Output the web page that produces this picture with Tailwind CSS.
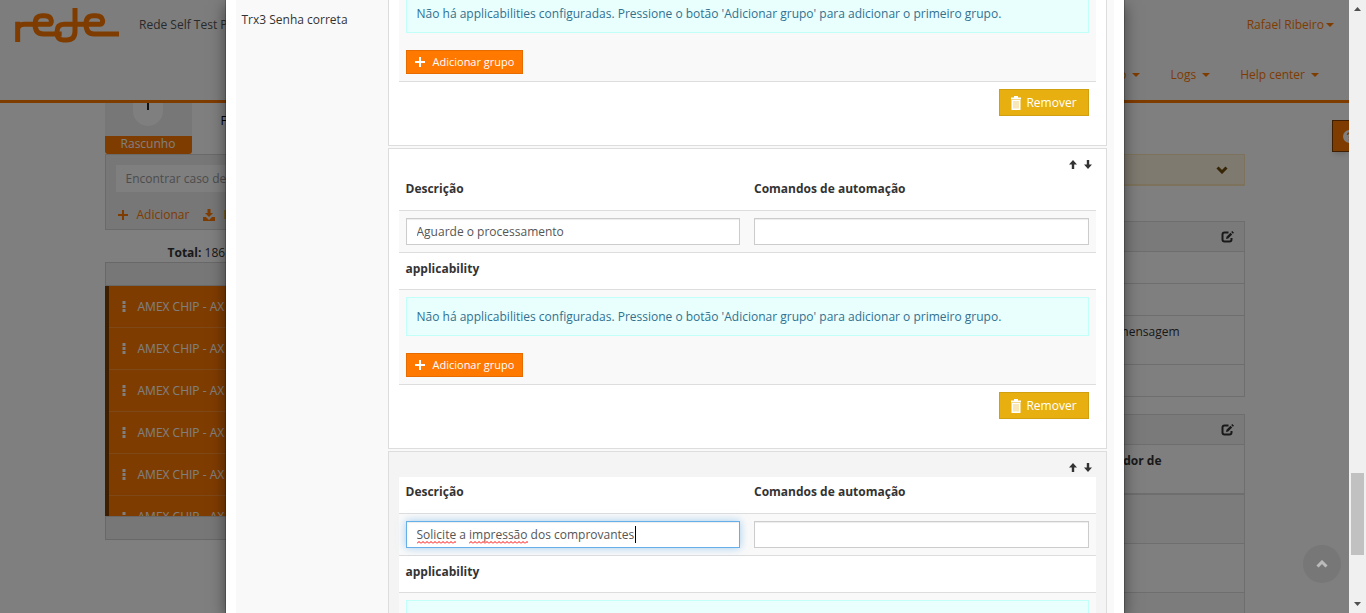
<!DOCTYPE html>
<html lang="pt-BR">
<head>
<meta charset="utf-8">
<meta name="viewport" content="width=device-width, initial-scale=1">
<title>Rede Self Test</title>
<script src="https://cdn.jsdelivr.net/npm/@tailwindcss/browser@4"></script>
</head>
<body class="font-['Open_Sans',sans-serif] text-xs leading-5 text-[#333]">
<svg class="hidden" aria-hidden="true">
  <symbol id="caret" viewBox="0 0 8 4"><path d="M0 0h8L4 4z" fill="currentColor"/></symbol>
  <symbol id="plus" viewBox="0 0 10 10"><path d="M4 0h2v4h4v2H6v4H4V6H0V4h4z" fill="currentColor"/></symbol>
  <symbol id="trash" viewBox="0 0 12 14"><path d="M4 0h4v1.500h3V3.500H1V1.500h3z" fill="currentColor"/><path d="M1.500 4h9v10h-9z" fill="currentColor"/><path d="M4 5v7.500M6 5v7.500M8 5v7.500" stroke="#e7b010" stroke-width=".6"/></symbol>
  <symbol id="up" viewBox="0 0 8 9"><path d="M4 0l4 4.500H5.200V9H2.800V4.500H0z" fill="currentColor"/></symbol>
  <symbol id="down" viewBox="0 0 8 9"><path d="M4 9L0 4.500h2.800V0h2.400v4.500H8z" fill="currentColor"/></symbol>
  <symbol id="edit" viewBox="0 0 13 12"><path d="M7.500 1.500H3.500q-2 0-2 2v5q0 2 2 2h5q2 0 2-2V7" fill="none" stroke="currentColor" stroke-width="2"/><path d="M5 8l.5-2.300L9.500 1.800l1.700 1.700-4 4zM10.200 1.100L11.300 0l1.700 1.700-1.100 1.100z" fill="currentColor"/></symbol>
  <symbol id="dots" viewBox="0 0 4 11"><path d="M.5 0h3v3h-3zM.5 4h3v3h-3zM.5 8h3v3h-3z" fill="currentColor"/></symbol>
  <symbol id="chev" viewBox="0 0 12 8"><path d="M1.500 1.500L6 6l4.500-4.500" fill="none" stroke="currentColor" stroke-width="3"/></symbol>
</svg>

<div class="flex h-screen overflow-hidden bg-white">
  <div class="relative min-w-0 flex-1 overflow-hidden">

    <!-- Page behind the dialog -->
    <header class="flex h-[103px] justify-between border-b-3 border-[#ff7800] bg-[#fafafa]">
      <div class="flex items-start pl-[10px]">
        <svg class="mt-1 h-[42px] w-[114px]" viewBox="0 0 342 126" fill="none" stroke="#ff7800" stroke-width="15" role="img" aria-label="Rede">
          <path d="M23 114V53M23 76Q25 61 42 61H118Q124 60 124 50Q122 35 104 35H96Q75 35 75 60Q75 90 100 90H155"/>
          <path d="M195 12V82Q195 108 170 108H160Q141 108 141 84Q141 61 162 61H270Q278 60 278 50Q276 35 258 35H250Q228 35 228 60Q228 90 252 90H327"/>
        </svg>
        <span class="mt-[15px] ml-[15px] text-[#555]">Rede Self Test P</span>
      </div>
      <nav class="flex flex-col items-end text-[#ff7800]">
        <a href="#" class="mt-[15px] mr-[15px] flex items-center">Rafael Ribeiro<svg class="ml-[2px] h-1 w-2"><use href="#caret"/></svg></a>
        <div class="mt-[30px] mr-[30px] flex gap-[30px]">
          <a href="#" class="flex items-center gap-[6px]">Configuração<svg class="h-1 w-2"><use href="#caret"/></svg></a>
          <a href="#" class="flex items-center gap-[6px]">Logs<svg class="h-1 w-2"><use href="#caret"/></svg></a>
          <a href="#" class="flex items-center gap-[6px]">Help center<svg class="h-1 w-2"><use href="#caret"/></svg></a>
        </div>
      </nav>
    </header>

    <div class="mx-auto flex max-w-[1140px] justify-between">
      <section class="w-1/3">
        <div class="flex">
          <div class="w-[87px]">
            <div class="flex h-[33px] justify-center bg-[#eee]"><div class="flex h-[23px] w-[30px] justify-center rounded-b-full bg-white"><div class="h-[7px] w-[2px] bg-[#222]"></div></div></div>
            <div class="h-[18px] rounded-b-[3px] bg-[#ff7800] text-center leading-4 text-white">Rascunho</div>
          </div>
          <span class="mt-2 ml-[29px] text-black">F</span>
        </div>
        <div class="h-[76px] border border-[#d5d5d5] bg-[#eee] px-[10px] pt-[10px]">
          <input type="text" aria-label="Encontrar caso de teste" placeholder="Encontrar caso de teste" class="block h-[27px] w-full bg-white px-[10px] placeholder:text-[#999]">
          <div class="mt-[13px] flex text-[#ff7800]">
            <button class="flex items-center"><svg class="mr-[9px] ml-[2px] h-[10px] w-[10px]"><use href="#plus"/></svg>Adicionar</button>
            <button class="ml-[14px] flex items-center gap-2"><svg class="h-3 w-3" viewBox="0 0 12 12" fill="currentColor"><path d="M4.500 0h3v4H10L6 8 2 4h2.500zM0 8h3l3 3 3-3h3v4H0z"/></svg>Importar</button>
          </div>
        </div>
        <p class="mt-[13px] pl-[63px] leading-[19px]"><b>Total:</b> 186</p>
        <div class="h-6 border border-[#d0d0d0] bg-[#eee]"></div>
        <ul class="h-[230px] overflow-hidden border-l-4 border-[#7f3c00] bg-[#ff7800] text-white">
          <li class="flex h-[42px] items-center border-b border-[#ff9030] pl-[13px]"><svg class="mr-3 h-[11px] w-1"><use href="#dots"/></svg>AMEX CHIP - AX</li>
          <li class="flex h-[42px] items-center border-b border-[#ff9030] pl-[13px]"><svg class="mr-3 h-[11px] w-1"><use href="#dots"/></svg>AMEX CHIP - AX</li>
          <li class="flex h-[42px] items-center border-b border-[#ff9030] pl-[13px]"><svg class="mr-3 h-[11px] w-1"><use href="#dots"/></svg>AMEX CHIP - AX</li>
          <li class="flex h-[42px] items-center border-b border-[#ff9030] pl-[13px]"><svg class="mr-3 h-[11px] w-1"><use href="#dots"/></svg>AMEX CHIP - AX</li>
          <li class="flex h-[42px] items-center border-b border-[#ff9030] pl-[13px]"><svg class="mr-3 h-[11px] w-1"><use href="#dots"/></svg>AMEX CHIP - AX</li>
          <li class="flex h-[42px] items-center pl-[13px]"><svg class="mr-3 h-[11px] w-1"><use href="#dots"/></svg>AMEX CHIP - AX</li>
        </ul>
        <div class="h-6 border border-[#d0d0d0] bg-[#eee]"></div>
      </section>

      <section class="mt-[51px] w-1/3">
        <div class="flex h-8 items-center justify-end border border-b-2 border-[#fbe6b8] bg-[#fef5e0] pr-4 text-[#6d4c0c]"><svg class="h-2 w-3"><use href="#chev"/></svg></div>
        <div class="mt-[35px] border border-[#ddd]">
          <div class="flex h-[30px] items-center justify-end border-b border-[#ddd] bg-[#f5f5f5] pr-[10px]"><button aria-label="Editar"><svg class="h-3 w-[13px]"><use href="#edit"/></svg></button></div>
          <div class="h-8 border-b border-[#ddd]"></div>
          <div class="h-8 border-b border-[#ddd]"></div>
          <div class="h-[49px] border-b border-[#ddd] pt-[6px] pr-16 text-right">mensagem</div>
          <div class="h-[31px]"></div>
        </div>
        <div class="mt-[17px] border border-[#ddd]">
          <div class="flex h-[30px] items-center justify-end border-b border-[#ddd] bg-[#f5f5f5] pr-[10px]"><button aria-label="Editar"><svg class="h-3 w-[13px]"><use href="#edit"/></svg></button></div>
          <div class="h-[50px] border-b-2 border-[#ddd] pt-[6px] pr-[82px] text-right font-bold">Identificador de</div>
          <div class="h-[49px] border-b border-[#ddd] bg-[#f9f9f9]"></div>
          <div class="h-[49px] border-b border-[#ddd]"></div>
          <div class="h-[49px] bg-[#f9f9f9]"></div>
        </div>
      </section>
    </div>

    <button aria-label="Ajuda" class="absolute top-[120px] right-0 flex h-8 w-[17px] items-center overflow-hidden border border-r-0 border-[#7f3c00] bg-[#ff7800] pl-[10px] shadow-md"><svg class="h-[13px] w-[13px] shrink-0" viewBox="0 0 13 13"><circle cx="6.500" cy="6.500" r="6.500" fill="#fff"/><path d="M4.500 5q0-2 2-2t2 1.800q0 1-2 2V8M6.500 9v1.500" fill="none" stroke="#ff7800" stroke-width="1.500"/></svg></button>

    <div class="absolute inset-0 bg-black/50"></div>
    <button aria-label="Voltar ao topo" class="absolute right-2 bottom-[30px] flex h-[38px] w-[38px] items-center justify-center rounded-full bg-[#777] text-[#bbb]"><svg class="h-2 w-3 rotate-180"><use href="#chev"/></svg></button>

    <!-- Dialog -->
    <div role="dialog" aria-label="Passos" class="absolute inset-0 mx-auto max-w-[898px] overflow-hidden bg-white px-[10px] shadow-[0_0_0_1px_rgba(0,0,0,0.2),0_5px_15px_rgba(0,0,0,0.5)]">
      <div class="flex h-full bg-[#f9f9f9]">
        <aside class="w-[152px] shrink-0 pt-[10px] pl-[6px]">Trx3 Senha correta</aside>
        <div class="flex min-w-0 flex-1 flex-col gap-[2px] pr-[7px]">

          <article class="shrink-0 border border-t-0 border-[#ddd] bg-white px-[10px]">
            <div class="border-b border-[#ddd] bg-[#f9f9f9] px-[7px] pb-[7px]">
              <p class="h-[33px] border border-t-0 border-[#c2fff8] bg-[#e8fffe] px-[10px] pt-1 text-[#31708f]">Não há applicabilities configuradas. Pressione o botão 'Adicionar grupo' para adicionar o primeiro grupo.</p>
              <button class="mt-[17px] flex h-6 items-center border border-[#e66c00] bg-[#ff7800] px-2 text-[11px] font-medium text-white"><svg class="mr-2 h-[10px] w-[10px]"><use href="#plus"/></svg>Adicionar grupo</button>
            </div>
            <div class="flex justify-end pt-[7px] pr-[7px] pb-[29px]"><button class="flex h-[27px] w-[90px] items-center justify-center gap-1 border border-[#d0a010] bg-[#e7b010] font-medium text-white"><svg class="h-[14px] w-3"><use href="#trash"/></svg>Remover</button></div>
          </article>

          <article class="shrink-0 border border-[#ddd] bg-white px-[10px]">
            <div class="flex h-[25px] items-center justify-end gap-[7px] pt-[6px] pr-1">
              <button aria-label="Mover para cima"><svg class="h-[9px] w-2"><use href="#up"/></svg></button>
              <button aria-label="Mover para baixo"><svg class="h-[9px] w-2"><use href="#down"/></svg></button>
            </div>
            <table class="w-full table-fixed border-separate border-spacing-0 bg-white text-left">
              <tr class="h-[36px]"><th id="d2" class="px-[7px] pb-[6px]">Descrição</th><th id="c2" class="px-[7px] pb-[6px]">Comandos de automação</th></tr>
              <tr class="bg-[#f9f9f9]">
                <td class="border-t border-[#ddd] p-[7px]"><input type="text" aria-labelledby="d2" value="Aguarde o processamento" class="block h-[27px] w-full border border-[#ccc] bg-white px-[10px] text-[#555] shadow-[inset_0_1px_1px_rgba(0,0,0,0.075)]"></td>
                <td class="border-t border-[#ddd] p-[7px]"><input type="text" aria-labelledby="c2" class="block h-[27px] w-full border border-[#ccc] bg-white px-[10px] text-[#555] shadow-[inset_0_1px_1px_rgba(0,0,0,0.075)]"></td>
              </tr>
              <tr class="h-[37px]"><th colspan="2" class="border-t border-[#ddd] px-[7px] pb-[5px]">applicability</th></tr>
              <tr class="bg-[#f9f9f9]"><td colspan="2" class="border-y border-[#ddd] p-[7px]">
                <p class="h-[39px] border border-[#c2fff8] bg-[#e8fffe] px-[10px] pt-[9px] text-[#31708f]">Não há applicabilities configuradas. Pressione o botão 'Adicionar grupo' para adicionar o primeiro grupo.</p>
                <button class="mt-[17px] flex h-6 items-center border border-[#e66c00] bg-[#ff7800] px-2 text-[11px] font-medium text-white"><svg class="mr-2 h-[10px] w-[10px]"><use href="#plus"/></svg>Adicionar grupo</button>
              </td></tr>
            </table>
            <div class="flex justify-end pt-[7px] pr-[7px] pb-[29px]"><button class="flex h-[27px] w-[90px] items-center justify-center gap-1 border border-[#d0a010] bg-[#e7b010] font-medium text-white"><svg class="h-[14px] w-3"><use href="#trash"/></svg>Remover</button></div>
          </article>

          <article class="shrink-0 border border-[#ddd] bg-[#f4f4f4] px-[10px]">
            <div class="flex h-[25px] items-center justify-end gap-[7px] pt-[6px] pr-1">
              <button aria-label="Mover para cima"><svg class="h-[9px] w-2"><use href="#up"/></svg></button>
              <button aria-label="Mover para baixo"><svg class="h-[9px] w-2"><use href="#down"/></svg></button>
            </div>
            <table class="w-full table-fixed border-separate border-spacing-0 bg-white text-left">
              <tr class="h-[36px]"><th id="d3" class="px-[7px] pb-[6px]">Descrição</th><th id="c3" class="px-[7px] pb-[6px]">Comandos de automação</th></tr>
              <tr class="bg-[#f9f9f9]">
                <td class="border-t border-[#ddd] p-[7px]">
                  <div class="relative">
                    <input type="text" aria-labelledby="d3" value="Solicite a impressão dos comprovantes" class="block h-[27px] w-full border border-[#66afe9] bg-white px-[10px] text-[#555] shadow-[inset_0_1px_1px_rgba(0,0,0,0.075),0_0_8px_rgba(102,175,233,0.6)]">
                    <svg class="absolute top-[20px] left-[11px] h-[3px] w-[220px]" aria-hidden="true">
                      <defs><pattern id="wave" width="4" height="3" patternUnits="userSpaceOnUse"><path d="M0 2.500L2 .5l2 2" fill="none" stroke="#f00"/></pattern></defs>
                      <rect width="39" height="3" fill="url(#wave)"/><rect x="52" width="59" height="3" fill="url(#wave)"/>
                    </svg>
                    <div class="absolute top-[5px] left-[229px] h-[17px] w-px bg-black"></div>
                  </div>
                </td>
                <td class="border-t border-[#ddd] p-[7px]"><input type="text" aria-labelledby="c3" class="block h-[27px] w-full border border-[#ccc] bg-white px-[10px] text-[#555] shadow-[inset_0_1px_1px_rgba(0,0,0,0.075)]"></td>
              </tr>
              <tr class="h-[37px]"><th colspan="2" class="border-t border-[#ddd] px-[7px] pb-[5px]">applicability</th></tr>
              <tr class="bg-[#f9f9f9]"><td colspan="2" class="border-y border-[#ddd] p-[7px]">
                <div class="h-[39px] border border-[#c2fff8] bg-[#e8fffe]"></div>
              </td></tr>
            </table>
          </article>
        </div>
      </div>
    </div>
  </div>

  <!-- Page scrollbar -->
  <div class="flex w-[17px] shrink-0 flex-col items-center justify-between bg-[#f0f0f0] py-[7px] text-[#505050]">
    <svg class="h-1 w-[7px]"><path d="M0 4h7L3.500 0z" fill="currentColor"/></svg>
    <div class="flex w-[13px] flex-1 flex-col justify-end pb-[47px]"><div class="h-[82px] bg-[#c1c1c1]"></div></div>
    <svg class="h-1 w-[7px]"><path d="M0 0h7L3.500 4z" fill="currentColor"/></svg>
  </div>
</div>
</body>
</html>
